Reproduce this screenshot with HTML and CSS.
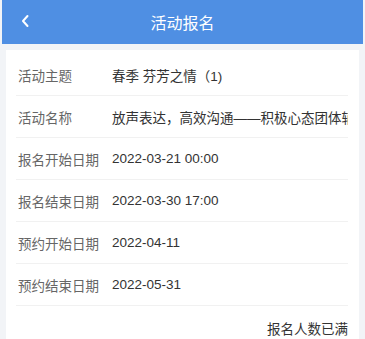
FILE: index.html
```html
<!DOCTYPE html>
<html lang="zh-CN">
  <head>
    <meta charset="UTF-8" />
    <meta name="viewport" content="width=device-width, initial-scale=1.0" />
    <title>活动报名</title>
    <link rel="stylesheet" href="styles.css">
  </head>
  <body>
    <div class="header">
      <span class="back">
        <svg width="10" height="14" viewBox="0 0 10 14">
          <path d="M7.5 2 L3 7 L7.5 12" fill="none" stroke="#fff" stroke-width="2" stroke-linecap="round" stroke-linejoin="round" />
        </svg>
      </span>
      <h1>活动报名</h1>
    </div>

    <div class="card">
      <div class="row">
        <span class="label">活动主题</span>
        <span class="value">春季 芬芳之情（1)</span>
      </div>
      <div class="row">
        <span class="label">活动名称</span>
        <span class="value">放声表达，高效沟通——积极心态团体辅导</span>
      </div>
      <div class="row">
        <span class="label">报名开始日期</span>
        <span class="value">2022-03-21 00:00</span>
      </div>
      <div class="row">
        <span class="label">报名结束日期</span>
        <span class="value">2022-03-30 17:00</span>
      </div>
      <div class="row">
        <span class="label">预约开始日期</span>
        <span class="value">2022-04-11</span>
      </div>
      <div class="row">
        <span class="label">预约结束日期</span>
        <span class="value">2022-05-31</span>
      </div>
      <div class="status">报名人数已满</div>
    </div>
  </body>
</html>
```

FILE: styles.css
```css
:root {
  --primary-color: #4f8fe3;
  --label-color: #666;
  --text-color: #333;
  --line-color: #f1f1f1;
}

* {
  margin: 0;
  padding: 0;
  box-sizing: border-box;
}

body {
  font-family: "Liberation Sans", "Noto Sans CJK SC", sans-serif;
  color: var(--text-color);
  background-color: #f2f4f7;
  overflow: hidden;
}

.header {
  position: relative;
  height: 44px;
  margin: 0 2px;
  background-color: var(--primary-color);
  display: flex;
  align-items: center;
  justify-content: center;
}

.header h1 {
  font-size: 16px;
  font-weight: normal;
  color: white;
}

.back {
  position: absolute;
  left: 18px;
  top: 14px;
  display: flex;
}

.card {
  margin: 6px 6px 0;
  padding: 4px 11px 0 10px;
  background-color: white;
  height: 300px;
}

.row {
  display: flex;
  align-items: center;
  height: 42px;
  border-bottom: 1px solid var(--line-color);
  font-size: 13.5px;
  white-space: nowrap;
  overflow: hidden;
}

.label {
  width: 96px;
  flex-shrink: 0;
  padding-left: 2px;
  color: var(--label-color);
}

.value {
  color: var(--text-color);
}

.status {
  text-align: right;
  font-size: 13.5px;
  color: var(--text-color);
  padding-top: 12px;
}
```
